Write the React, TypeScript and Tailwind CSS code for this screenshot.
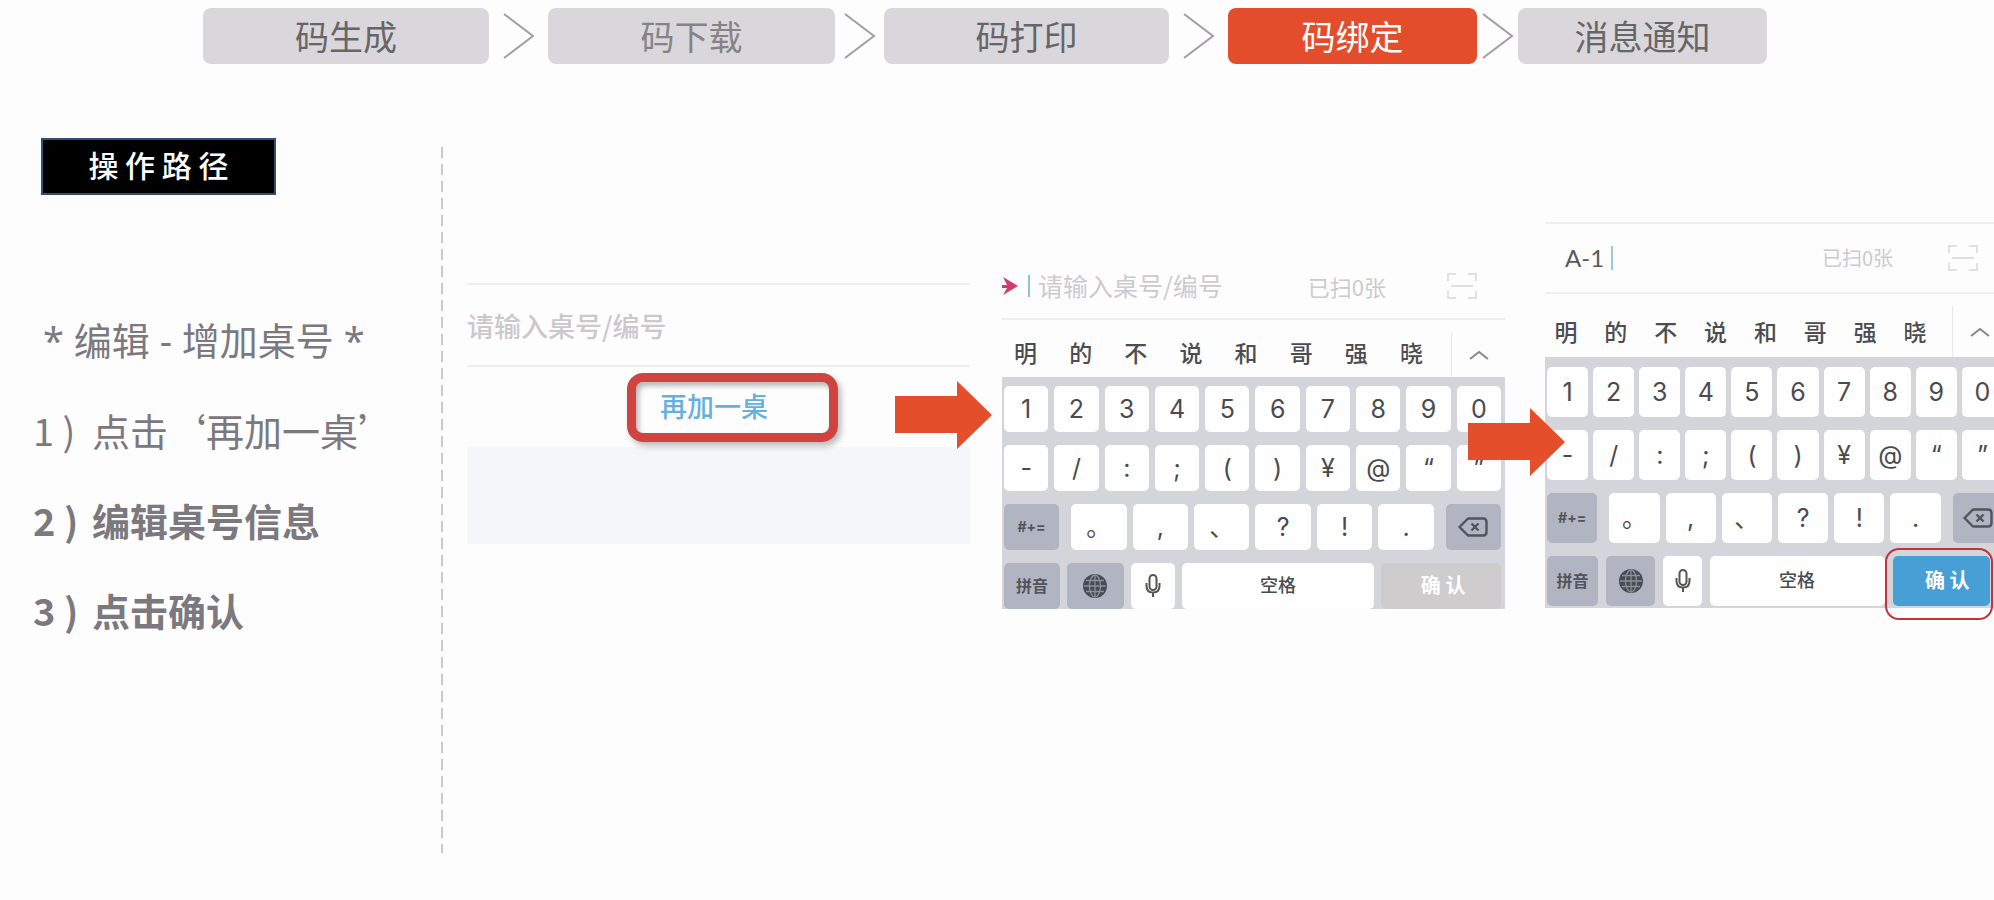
import { Fragment } from 'react'
import clsx from 'clsx'

const STEPS = [
  { label: '码生成', tone: 'bg-[#d9d7db] text-[#666568]' },
  { label: '码下载', tone: 'bg-[#d9d7db] text-[#858387]' },
  { label: '码打印', tone: 'bg-[#d9d7db] text-[#666568]' },
  { label: '码绑定', tone: 'bg-[#e34d2c] text-white' },
  { label: '消息通知', tone: 'bg-[#d9d7db] text-[#666568]' },
]

const TASKS = [
  { mark: '1 )', text: '点击‘再加一桌’', bold: false },
  { mark: '2 )', text: '编辑桌号信息', bold: true },
  { mark: '3 )', text: '点击确认', bold: true },
]

const CANDIDATES = ['明', '的', '不', '说', '和', '哥', '强', '晓']
const DIGITS = ['1', '2', '3', '4', '5', '6', '7', '8', '9', '0']
const SYMBOLS = ['-', '/', ':', ';', '(', ')', '¥', '@', '“', '”']
const MARKS = ['。', ',', '、', '?', '!', '.']

function StepChevron() {
  return (
    <svg viewBox="0 0 32 46" className="h-[46px] w-8 justify-self-center" fill="none" stroke="#a19da3" strokeWidth="2">
      <path d="M1 1 L30 23 L1 45" />
    </svg>
  )
}

function BlockArrow({ className }: { className: string }) {
  return (
    <svg viewBox="0 0 97 68" className={clsx('absolute z-10 h-[68px] w-[97px]', className)} fill="#e54e2a">
      <path d="M0 15 H62 V0 L97 34 L62 68 V52 H0 Z" />
    </svg>
  )
}

function ScanIcon() {
  return (
    <svg viewBox="0 0 30 28" className="h-7 w-[30px] shrink-0" fill="none" stroke="#e2dfe4" strokeWidth="2">
      <path d="M1 9 V2 H9 M21 2 H29 V9 M29 19 V26 H21 M9 26 H1 V19 M4 14 H26" />
    </svg>
  )
}

function DeleteIcon() {
  return (
    <svg viewBox="0 0 30 20" className="h-5 w-[30px]" fill="none" stroke="#50545c" strokeWidth="2.4" strokeLinejoin="round">
      <path d="M10 1.5 H25 Q28.5 1.5 28.5 5 V15 Q28.5 18.5 25 18.5 H10 L1.5 10 Z" />
      <path d="M13.5 6.5 L20.5 13.5 M20.5 6.5 L13.5 13.5" />
    </svg>
  )
}

function GlobeIcon() {
  return (
    <svg viewBox="0 0 26 26" className="size-[26px]" fill="none" stroke="#8b909b" strokeWidth="1.3">
      <circle cx="13" cy="13" r="12" fill="#474b54" stroke="none" />
      <ellipse cx="13" cy="13" rx="5.5" ry="11" />
      <path d="M13 2 V24 M2 13 H24 M4 7.5 H22 M4 18.5 H22" />
    </svg>
  )
}

function MicIcon() {
  return (
    <svg viewBox="0 0 18 26" className="h-[26px] w-[18px]" fill="none" stroke="#55544f" strokeWidth="2">
      <rect x="5.5" y="2" width="7" height="15" rx="3.5" />
      <path d="M2.5 10 V13 Q2.5 19.5 9 19.5 Q15.5 19.5 15.5 13 V10 M9 19.5 V24" />
    </svg>
  )
}

const KEY = 'flex min-w-0 items-center justify-center rounded-[5px]'
const LIGHT = 'bg-[#fefefe] text-[#4b4b4d]'
const DARK = 'bg-[#b0b5c1] text-[#50545c]'

function Keyboard({ large }: { large?: boolean }) {
  return (
    <div
      className={clsx(
        'grid gap-y-[13px] bg-[#d4d5da] pl-0.5 font-[Inter,"Noto_Sans_CJK_SC",sans-serif] text-[25px] leading-none',
        large ? '-mr-3 auto-rows-[50px] pt-2.5 pr-[3px] pb-0.5' : 'auto-rows-[46px] pt-[9px] pr-1',
      )}
    >
      {[DIGITS, SYMBOLS].map((row, i) => (
        <div key={i} className={clsx('grid grid-cols-10', large ? 'gap-x-[5px]' : 'gap-x-1.5')}>
          {row.map((k) => <button key={k} type="button" className={clsx(KEY, LIGHT)}>{k}</button>)}
        </div>
      ))}
      <div className="grid grid-cols-[55fr_362fr_55fr] gap-x-3">
        <button type="button" className={clsx(KEY, DARK, 'text-sm font-bold')}>#+=</button>
        <div className="grid grid-cols-6 gap-x-1.5">
          {MARKS.map((k) => <button key={k} type="button" className={clsx(KEY, LIGHT)}>{k}</button>)}
        </div>
        <button type="button" aria-label="删除" className={clsx(KEY, DARK)}><DeleteIcon /></button>
      </div>
      <div
        className={clsx(
          'grid',
          large ? 'grid-cols-[51fr_49fr_38fr_174fr_97fr] gap-x-2 pr-[13px]' : 'grid-cols-[56fr_57fr_44fr_193fr_120fr] gap-x-[7px]',
        )}
      >
        <button type="button" className={clsx(KEY, DARK, 'text-base font-bold')}>拼音</button>
        <button type="button" aria-label="切换语言" className={clsx(KEY, DARK)}><GlobeIcon /></button>
        <button type="button" aria-label="语音" className={clsx(KEY, LIGHT)}><MicIcon /></button>
        <button type="button" className={clsx(KEY, LIGHT, 'text-lg font-medium')}>空格</button>
        <div className="relative grid">
          <button type="button" className={clsx(KEY, 'text-xl font-bold text-white', large ? 'bg-[#479fd6] pl-3' : 'bg-[#cfccce] pl-1')}>确 认</button>
          {large && <span className="pointer-events-none absolute -top-2 -right-[3px] -bottom-3.5 -left-2 rounded-[14px] border-2 border-[#c4323c]" />}
        </div>
      </div>
    </div>
  )
}

function Candidates({ large }: { large?: boolean }) {
  return (
    <div className={clsx('flex font-medium text-[#4d4c4f] text-[23px]', large ? '-mr-3 h-[63px]' : 'h-[57px]')}>
      <div className={clsx('-ml-1 grid flex-1 grid-cols-8 items-center pr-3 text-center', large ? 'pt-3' : 'pt-2')}>
        {CANDIDATES.map((c) => <span key={c}>{c}</span>)}
      </div>
      <button type="button" aria-label="展开" className="mt-3 flex w-[54px] items-center justify-center border-l border-[#e9e7eb]">
        <svg viewBox="0 0 20 10" className="h-2.5 w-5" fill="none" stroke="#8a888c" strokeWidth="2">
          <path d="M1 9 L10 2 L19 9" />
        </svg>
      </button>
    </div>
  )
}

export default function App() {
  return (
    <div className="min-h-screen overflow-hidden bg-[#fefdfe] font-['Noto_Sans_CJK_SC',sans-serif]">
      <nav className="grid grid-cols-[203fr_286fr_59fr_287fr_49fr_285fr_59fr_249fr_41fr_249fr_227fr] items-center pt-2">
        {STEPS.map((s, i) => (
          <Fragment key={s.label}>
            {i > 0 && <StepChevron />}
            <button type="button" className={clsx('h-14 min-w-0 rounded-lg text-[34px] leading-none', i === 0 && 'col-start-2', s.tone)}>{s.label}</button>
          </Fragment>
        ))}
      </nav>

      <main className="grid grid-cols-[441fr_2px_24fr_503fr_32fr_503fr_40fr_449fr] items-start">
        <section className="pt-[74px] whitespace-nowrap text-[#7b797d]">
          <h1 className="ml-[41px] flex h-[57px] w-[235px] items-center justify-center border-2 border-[#34506e] bg-black pb-1 text-[30px] font-medium text-white">操 作 路 径</h1>
          <div className="mt-[100px] pl-[33px] text-[38px] leading-[90px]">
            <p className="pl-2.5 font-['Noto_Sans','Noto_Sans_CJK_SC',sans-serif]">* 编辑 - 增加桌号 *</p>
            <ol>
              {TASKS.map((task) => (
                <li key={task.mark} className={clsx('flex', task.bold && 'font-bold')}>
                  <span className="w-[59px]">{task.mark}</span>
                  {task.text}
                </li>
              ))}
            </ol>
          </div>
        </section>

        <div className="mt-[83px] h-[706px] bg-[repeating-linear-gradient(to_bottom,#cdc8d0_0_11px,transparent_11px_17px)]" />

        <section className="col-start-4 mt-[219px] min-w-0">
          <input aria-label="桌号" placeholder="请输入桌号/编号" className="block h-[84px] w-full border-y-2 border-[#f1eef3] text-[27px] font-medium outline-none placeholder:text-[#cbc8cc]" />
          <div className="flex h-20 items-start justify-center pt-1.5 pl-7">
            <button type="button" className="h-[69px] w-[211px] rounded-2xl border-[9px] border-[#d0443f] pb-1 pl-6 text-left text-[27px] leading-none font-medium text-[#66b0e0] shadow-[3px_4px_6px_#00000044,inset_3px_4px_5px_#00000044]">再加一桌</button>
          </div>
          <div className="h-[97px] bg-[#f5f6fa]" />
        </section>

        <section className="relative col-start-6 mt-[190px] min-w-0">
          <BlockArrow className="top-[127px] -left-[107px]" />
          <div className="flex h-[66px] items-center border-b-2 border-[#f1eef3] pr-7">
            <svg viewBox="0 0 16 18" className="h-[18px] w-4 shrink-0" fill="#d63a6c">
              <path d="M1 0 L16 9 L1 18 L5 11 H0 V8 H5 Z" />
            </svg>
            <span className="ml-2.5 h-[22px] w-0.5 shrink-0 bg-[#8fc3cf]" />
            <input aria-label="桌号/编号" placeholder="请输入桌号/编号" className="ml-2 min-w-0 flex-1 text-[25px] outline-none placeholder:text-[#cdcacf]" />
            <span className="mr-[61px] text-[22px] whitespace-nowrap text-[#cdcacf]">已扫0张</span>
            <ScanIcon />
          </div>
          <Candidates />
          <Keyboard />
        </section>

        <section className="relative col-start-8 mt-[158px] min-w-0">
          <BlockArrow className="top-[186px] -left-[77px]" />
          <div className="flex h-[72px] items-center border-y-2 border-[#f1eef3] pr-4 pl-5">
            <input aria-label="桌号/编号" defaultValue="A-1" className="w-[46px] font-[Lato,sans-serif] text-2xl text-[#59585b] outline-none" />
            <span className="h-6 w-0.5 shrink-0 bg-[#9fc4dc]" />
            <span className="mr-[55px] ml-auto text-xl whitespace-nowrap text-[#cdcacf]">已扫0张</span>
            <ScanIcon />
          </div>
          <Candidates large />
          <Keyboard large />
        </section>
      </main>
    </div>
  )
}
